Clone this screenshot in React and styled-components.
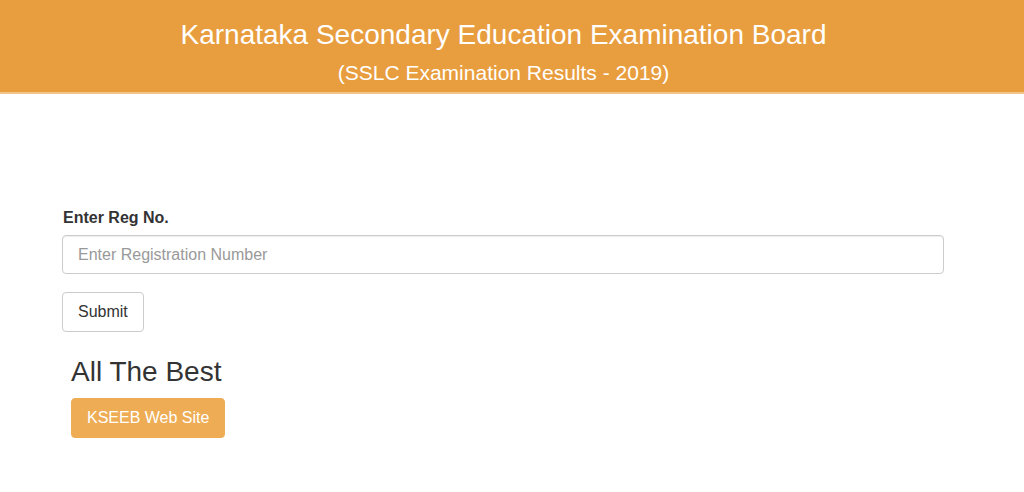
import React from "react";
import styled, { createGlobalStyle } from "styled-components";

const GlobalStyle = createGlobalStyle`
  body {
    margin: 0;
    font-family: "Liberation Sans", Arial, sans-serif;
    background: #fff;
    color: #333;
  }
`;

const Header = styled.header`
  background: #e89d3e;
  height: 94px;
  box-sizing: border-box;
  padding: 18px 17px 0 0;
  text-align: center;
  color: #fff;
  border-bottom: 2px solid #f2c48a;
`;

const Title = styled.h1`
  margin: 0;
  font-size: 28px;
  font-weight: normal;
  line-height: 34px;
`;

const Subtitle = styled.h2`
  margin: 8px 0 0;
  font-size: 21px;
  font-weight: normal;
  line-height: 26px;
`;

const Main = styled.main`
  padding: 114px 0 0 62px;
  width: 882px;
`;

const Label = styled.label`
  display: block;
  font-size: 16px;
  font-weight: bold;
  margin: 0 0 0 1px;
  line-height: 20px;
`;

const Input = styled.input`
  display: block;
  box-sizing: border-box;
  width: 100%;
  height: 39px;
  margin-top: 7px;
  padding: 6px 15px;
  font-family: inherit;
  font-size: 16px;
  color: #555;
  border: 1px solid #ccc;
  border-radius: 4px;
  box-shadow: inset 0 1px 1px rgba(0, 0, 0, 0.075);

  &::placeholder {
    color: #999;
  }
`;

const Button = styled.button`
  display: inline-block;
  box-sizing: border-box;
  height: 40px;
  padding: 0 15px;
  font-family: inherit;
  font-size: 16px;
  border-radius: 4px;
  cursor: pointer;
  color: ${(p) => (p.$warning ? "#fff" : "#333")};
  background: ${(p) => (p.$warning ? "#eeac54" : "#fff")};
  border: 1px solid ${(p) => (p.$warning ? "#eeac54" : "#ccc")};
`;

const SubmitRow = styled.div`
  margin-top: 18px;
`;

const Extra = styled.div`
  padding-left: 9px;
  margin-top: 23px;
`;

const Best = styled.h3`
  margin: 0 0 9px;
  font-size: 28px;
  font-weight: normal;
  line-height: 34px;
  color: #333;
`;

const App = () => {
  return (
    <>
      <GlobalStyle />
      <Header>
        <Title>Karnataka Secondary Education Examination Board</Title>
        <Subtitle>(SSLC Examination Results - 2019)</Subtitle>
      </Header>
      <Main>
        <Label htmlFor="regno">Enter Reg No.</Label>
        <Input id="regno" placeholder="Enter Registration Number" />
        <SubmitRow>
          <Button>Submit</Button>
        </SubmitRow>
        <Extra>
          <Best>All The Best</Best>
          <Button $warning>KSEEB Web Site</Button>
        </Extra>
      </Main>
    </>
  );
};

export default App;
